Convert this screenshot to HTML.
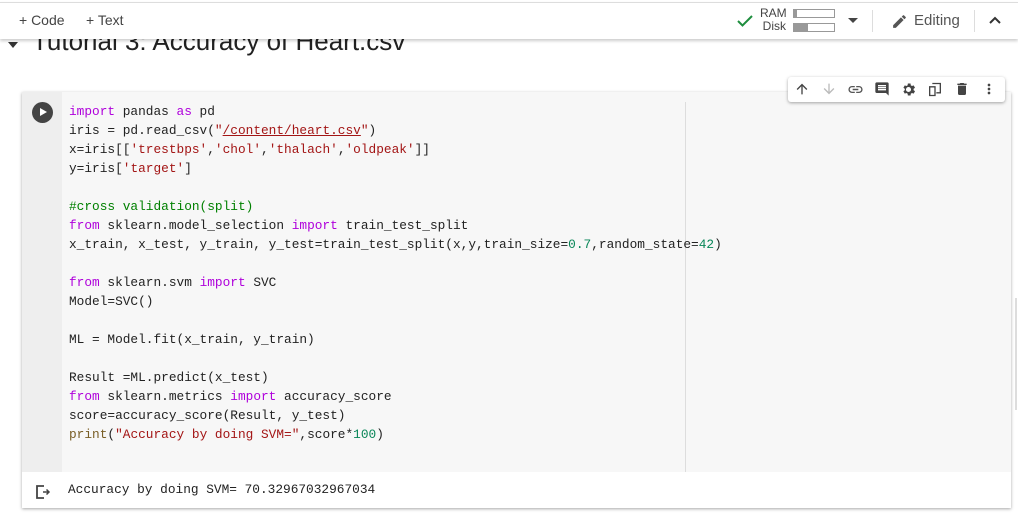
<!DOCTYPE html>
<html><head><style>
body{margin:0;width:1018px;height:515px;background:#fff;position:relative;overflow:hidden;font-family:"Liberation Sans",sans-serif}
.top{position:absolute;left:0;top:2px;width:1018px;height:36px;background:#fff;border-top:1px solid #ddd;box-shadow:0 2px 3px rgba(0,0,0,.2);z-index:5}
.title{position:absolute;left:32px;top:26px;font-size:26px;color:#212121;z-index:1}
.tri{position:absolute;left:8px;top:42px;width:0;height:0;border-left:5px solid transparent;border-right:5px solid transparent;border-top:6px solid #333}
.cell{position:absolute;left:22px;top:92px;width:989px;height:416px;background:#fff;box-shadow:0 1px 3px rgba(0,0,0,.35)}
.gut{position:absolute;left:0;top:0;width:40px;height:380px;background:#eeeeee}
.code{position:absolute;left:40px;top:0;width:949px;height:380px;background:#f7f7f7}
pre{margin:0;position:absolute;left:47px;top:10px;font-family:"Liberation Mono",monospace;font-size:12.8px;line-height:19px;color:#222}
.k{color:#af00db}.s{color:#a31515}.n{color:#098658}.c{color:#008000}.f{color:#795e26}
.play{position:absolute;left:10px;top:10px;width:21px;height:21px;border-radius:50%;background:#444}
.play:after{content:"";position:absolute;left:8px;top:6px;border-left:7px solid #fff;border-top:4.5px solid transparent;border-bottom:4.5px solid transparent}
.ruler{position:absolute;left:663px;top:10px;width:1px;height:370px;background:#ddd}
.out{position:absolute;left:46px;top:390px;font-family:"Liberation Mono",monospace;font-size:12.8px;color:#222}
.tb{position:absolute;left:788px;top:77px;width:217px;height:25px;background:#fff;border-radius:3px;box-shadow:0 1px 3px rgba(0,0,0,.35);z-index:3}
.tb svg{position:absolute;top:4px}
.bar{position:absolute;width:40px;height:7px;border:1px solid #999;background:#fff}
.bar i{position:absolute;left:0;top:0;height:7px;background:#999}
</style></head><body>
<div class="tri"></div>
<div class="title">Tutorial 3: Accuracy of Heart.csv</div>
<div class="top">
 <div style="position:absolute;left:19px;top:9px;font-size:14px;color:#444">+ Code</div>
 <div style="position:absolute;left:86px;top:9px;font-size:14px;color:#444">+ Text</div>
 <svg style="position:absolute;left:737px;top:11px" width="16" height="14" viewBox="0 0 16 14"><path d="M1 7l4.5 4.5L15 2" stroke="#1e8e3e" stroke-width="2" fill="none"/></svg>
 <div style="position:absolute;left:760px;top:4px;font-size:12px;line-height:13px;color:#444;text-align:right;width:26px">RAM<br>Disk</div>
 <div class="bar" style="left:793px;top:6px"><i style="width:3px"></i></div>
 <div class="bar" style="left:793px;top:20px"><i style="width:14px"></i></div>
 <div style="position:absolute;left:848px;top:15px;border-left:5px solid transparent;border-right:5px solid transparent;border-top:5px solid #444"></div>
 <div style="position:absolute;left:872px;top:7px;width:1px;height:22px;background:#ddd"></div>
 <svg style="position:absolute;left:891px;top:10px" width="17" height="17" viewBox="0 0 24 24"><path fill="#555" d="M3 17.25V21h3.75L17.81 9.94l-3.75-3.75L3 17.25zM20.71 7.04a1 1 0 000-1.41l-2.34-2.34a1 1 0 00-1.41 0l-1.83 1.83 3.75 3.75 1.83-1.83z"/></svg>
 <div style="position:absolute;left:914px;top:9px;font-size:15px;color:#555">Editing</div>
 <div style="position:absolute;left:974px;top:7px;width:1px;height:22px;background:#ddd"></div>
 <svg style="position:absolute;left:988px;top:12px" width="14" height="10" viewBox="0 0 14 10"><path d="M2 8l5-5 5 5" stroke="#333" stroke-width="2" fill="none"/></svg>
</div>
<div class="tb">
 <svg style="left:6px" width="16" height="16" viewBox="0 0 24 24"><path fill="#444" d="M4 12l1.41 1.41L11 7.83V20h2V7.83l5.58 5.59L20 12l-8-8z"/></svg>
 <svg style="left:33px" width="16" height="16" viewBox="0 0 24 24"><path fill="#bbb" d="M20 12l-1.41-1.41L13 16.17V4h-2v12.17l-5.58-5.59L4 12l8 8z"/></svg>
 <svg style="left:59px" width="17" height="17" viewBox="0 0 24 24"><path fill="#555" d="M3.9 12c0-1.710 1.39-3.1 3.1-3.1h4V7H7a5 5 0 000 10h4v-1.9H7c-1.71 0-3.1-1.39-3.1-3.1zM8 13h8v-2H8v2zm9-6h-4v1.9h4c1.71 0 3.1 1.39 3.1 3.1s-1.39 3.1-3.1 3.1h-4V17h4a5 5 0 000-10z"/></svg>
 <svg style="left:86px" width="16" height="16" viewBox="0 0 24 24"><path fill="#444" d="M21.99 4c0-1.1-.89-2-1.99-2H4c-1.1 0-2 .9-2 2v12c0 1.1.9 2 2 2h14l4 4-.01-18zM18 14H6v-2h12v2zm0-3H6V9h12v2zm0-3H6V6h12v2z"/></svg>
 <svg style="left:112px" width="17" height="17" viewBox="0 0 24 24"><path fill="#444" d="M19.14 12.94a7 7 0 000-1.88l2.03-1.58-1.92-3.320-2.39.96a7 7 0 00-1.62-.94L14.9 3.6h-3.8l-.36 2.58c-.59.24-1.13.56-1.62.94l-2.39-.96-1.92 3.32 2.03 1.58a7 7 0 000 1.88l-2.03 1.58 1.92 3.32 2.39-.96c.49.38 1.03.7 1.62.94l.36 2.58h3.8l.36-2.58c.59-.24 1.13-.56 1.62-.94l2.39.96 1.92-3.32-2.030-1.58zM12 15.6a3.6 3.6 0 110-7.2 3.6 3.6 0 010 7.2z"/></svg>
 <svg style="left:139px" width="16" height="17" viewBox="0 0 24 24"><path fill="none" stroke="#444" stroke-width="2" d="M8 3h12v14H14M4 8h8v13H4z"/></svg>
 <svg style="left:166px" width="16" height="16" viewBox="0 0 24 24"><path fill="#444" d="M6 19c0 1.1.9 2 2 2h8c1.1 0 2-.9 2-2V7H6v12zM19 4h-3.5l-1-1h-5l-1 1H5v2h14V4z"/></svg>
 <svg style="left:193px" width="16" height="16" viewBox="0 0 24 24"><path fill="#444" d="M12 8a2 2 0 100-4 2 2 0 000 4zm0 2a2 2 0 100 4 2 2 0 000-4zm0 6a2 2 0 100 4 2 2 0 000-4z"/></svg>
</div>
<div class="cell">
 <div class="gut"></div><div class="code"></div>
 <div class="play"></div>
 <div class="ruler"></div>
<pre><span class="k">import</span> pandas <span class="k">as</span> pd
iris = pd.read_csv(<span class="s">"<u>/content/heart.csv</u>"</span>)
x=iris[[<span class="s">'trestbps'</span>,<span class="s">'chol'</span>,<span class="s">'thalach'</span>,<span class="s">'oldpeak'</span>]]
y=iris[<span class="s">'target'</span>]

<span class="c">#cross validation(split)</span>
<span class="k">from</span> sklearn.model_selection <span class="k">import</span> train_test_split
x_train, x_test, y_train, y_test=train_test_split(x,y,train_size=<span class="n">0.7</span>,random_state=<span class="n">42</span>)

<span class="k">from</span> sklearn.svm <span class="k">import</span> SVC
Model=SVC()

ML = Model.fit(x_train, y_train)

Result =ML.predict(x_test)
<span class="k">from</span> sklearn.metrics <span class="k">import</span> accuracy_score
score=accuracy_score(Result, y_test)
<span class="f">print</span>(<span class="s">"Accuracy by doing SVM="</span>,score*<span class="n">100</span>)</pre>
 <svg style="position:absolute;left:13px;top:392px" width="16" height="16" viewBox="0 0 16 16"><path d="M9 2H2v12h7" stroke="#444" stroke-width="1.8" fill="none"/><path d="M8 8h6M11.5 5.5L14 8l-2.5 2.5" stroke="#444" stroke-width="1.5" fill="none"/></svg>
 <div class="out">Accuracy by doing SVM= 70.32967032967034</div>
</div>
<div style="position:absolute;left:1015px;top:298px;width:2px;height:112px;background:#ddd"></div>
</body></html>
